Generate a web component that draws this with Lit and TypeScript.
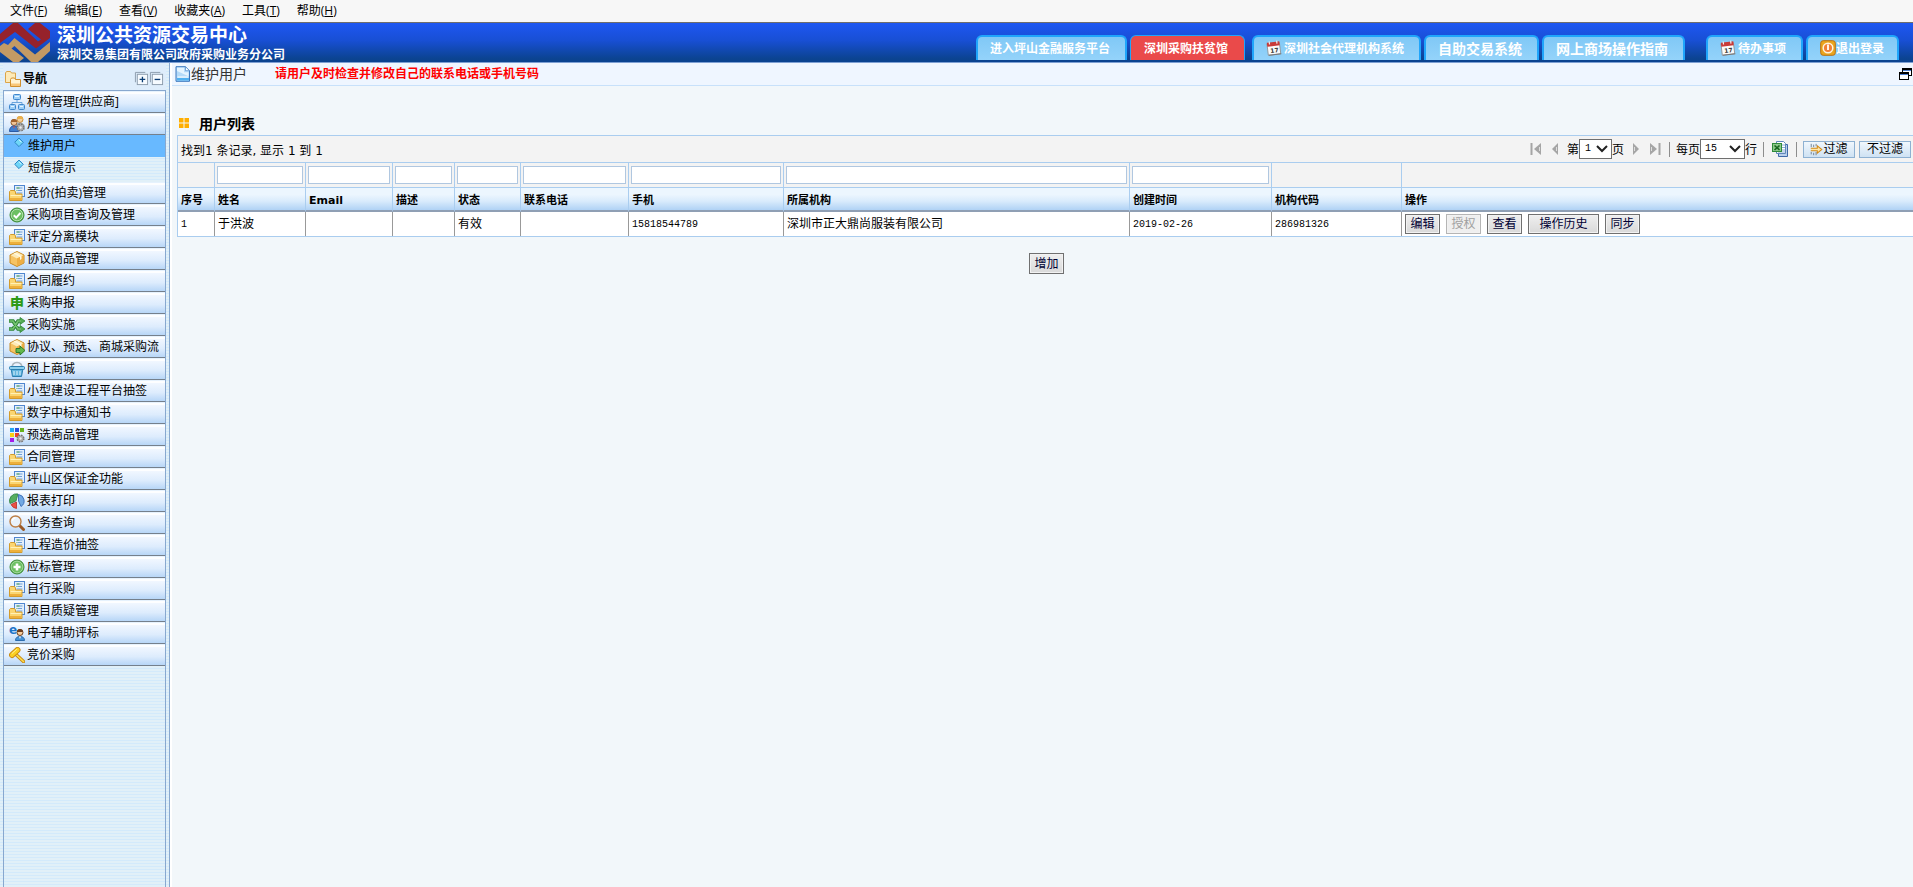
import { LitElement, html, svg, css, nothing, type SVGTemplateResult } from "lit";
import { customElement } from "lit/decorators.js";
import { classMap } from "lit/directives/class-map.js";

const docFolder = svg`
  <rect x="5.5" y=".5" width="10" height="11" fill="#e3effb" stroke="#4f86cf"/>
  <path d="M7.500 3h6M9 5.500h4M7.500 8h6" stroke="#6f9fd8" fill="none"/>
  <path d="M7.500 3h3M7.500 5.500h1" stroke="#58a84e" fill="none"/>
  <path d="M.5 15.500V6.500L1.500 5.500h4l1 1.500v2h6.500v6.500z" fill="#fbd671" stroke="#d39b2c"/>
  <path d="M1.500 10.500h11" stroke="#fff1b8" fill="none"/>
  <path d="M1 13h11.500v2H1z" fill="#eeb03c"/>`;

const cube = svg`
  <path d="M8 .5l7 3.500v8L8 15.500 1 12V4z" fill="#f6c363" stroke="#c88a24"/>
  <path d="M8 1l6.300 3.200L8 7.400 1.700 4.200z" fill="#fdeab8"/>
  <path d="M8 7.500v7.600l6.500-3.300V4.300z" fill="#eeae44"/>
  <path d="M4.500 2.600l6.500 3.300v3l1.500-.8V5L6.200 1.800z" fill="#fff8de"/>`;

const gear = svg`
  <circle cx="11.500" cy="11.500" r="3.300" fill="#bbb" stroke="#777" stroke-width="1.500" stroke-dasharray="1.600 1"/>
  <circle cx="11.500" cy="11.500" r="2.700" fill="#a9a9a9"/>
  <circle cx="11.500" cy="11.500" r="1.200" fill="#eee"/>`;

const icons: Record<string, SVGTemplateResult> = {
  folder: docFolder,
  org: svg`
    <path d="M8 5v4M3 11V8.500h10V11" fill="none" stroke="#6aa5dc"/>
    <rect x="4.500" y=".5" width="7" height="5" rx="1" fill="#9fd0f7" stroke="#3f86cc"/>
    <rect x=".5" y="10.500" width="6" height="5" rx="1" fill="#9fd0f7" stroke="#3f86cc"/>
    <rect x="9.500" y="10.500" width="6" height="5" rx="1" fill="#9fd0f7" stroke="#3f86cc"/>
    <path d="M6 2.500h4M2 12.500h3M11 12.500h3" stroke="#e6f5ff"/>`,
  users: svg`
    <circle cx="11" cy="3.500" r="3" fill="#f4cf9b" stroke="#c98b32"/>
    <path d="M8 3a3 3 0 0 1 6 0z" fill="#eab04c"/>
    <path d="M7 14V9q1-2.500 4-2.500T15.500 9v5z" fill="#9a9fa2"/>
    <circle cx="5" cy="6.500" r="3" fill="#f0c496" stroke="#8d5a2c"/>
    <path d="M2 6a3 3 0 0 1 6 0z" fill="#a2622d"/>
    <path d="M.5 15.500q0-5.500 4.500-5.500t4.500 5.500z" fill="#3f7ed0" stroke="#2b5aa4"/>
    <path d="M4 10.500l1 2 1-2z" fill="#e64a3a"/>${gear}`,
  check: svg`
    <circle cx="8" cy="8" r="7" fill="#4caa45" stroke="#3c8a37"/>
    <circle cx="8" cy="8" r="5.800" fill="#6cc062" stroke="#c9ebc4" stroke-width=".8"/>
    <path d="M4.800 8.200l2.400 2.400 4.200-4.600" fill="none" stroke="#fff" stroke-width="2"/>`,
  cube,
  shuffle: svg`
    <path d="M0 4h4l5 8h3M0 12h4l5-8h3" fill="none" stroke="#2e8636" stroke-width="3.600"/>
    <path d="M11 .5l5 3.500-5 3.500zM11 8.500l5 3.500-5 3.500z" fill="#55ab54" stroke="#2e8636" stroke-width=".8"/>
    <path d="M.5 4H4l5 8h3M.5 12H4l5-8h3" fill="none" stroke="#74c270" stroke-width="1.600"/>`,
  cubeArrow: svg`${cube}
    <path d="M7 9.500h4V7l5 4.500-5 4.500v-2.500H7z" fill="#62b94e" stroke="#2f7c2a"/>`,
  basket: svg`
    <path d="M3 7q0-5.500 5-5.500T13 7" fill="none" stroke="#a9b4bb" stroke-width="1.500"/>
    <path d="M2 7.500h12l-1.500 8h-9z" fill="#62b4de" stroke="#2b7fb0"/>
    <rect x=".5" y="5.500" width="15" height="3" rx="1" fill="#8fd0ee" stroke="#2b7fb0"/>
    <path d="M5 10v4M8 10v4M11 10v4" stroke="#e0f4fd"/>`,
  gridGear: svg`
    <rect x="1" y="1" width="4" height="4" fill="#23a9f2"/>
    <rect x="6" y="1" width="4" height="4" fill="#2a50dc"/>
    <rect x="11" y="1" width="4" height="4" fill="#67b31b"/>
    <rect x="1" y="6" width="4" height="4" fill="#f7cf17"/>
    <rect x="6" y="6" width="4" height="4" fill="#e9432c"/>
    <rect x="1" y="11" width="4" height="4" fill="#a51bea"/>${gear}`,
  pie: svg`
    <path d="M7 8L1 10.500A7 7 0 0 1 9 1z" fill="#55ae5f" stroke="#2d7f42" stroke-width=".8"/>
    <path d="M9.500 8V1.500a6.500 6.500 0 0 1 2.500 12z" fill="#72a9e4" stroke="#2b60ae" stroke-width=".8"/>
    <path d="M7.500 9v6.500A7 7 0 0 1 2 11.500z" fill="#ec4f42" stroke="#b92c25" stroke-width=".8"/>`,
  search: svg`
    <path d="M10 10l4.500 4.500" stroke="#9a5a28" stroke-width="3" stroke-linecap="round"/>
    <circle cx="6.500" cy="6.500" r="5.500" fill="#e9f2fa" stroke="#bd7f45" stroke-width="1.400"/>
    <path d="M3.500 6a3 3 0 0 1 3-3" fill="none" stroke="#fff" stroke-width="1.300"/>`,
  plus: svg`
    <circle cx="8" cy="8" r="7" fill="#4caa45" stroke="#3c8a37"/>
    <circle cx="8" cy="8" r="5.900" fill="#6cc062" stroke="#b7e2b1" stroke-width=".8"/>
    <path d="M8 4.500v7M4.500 8h7" stroke="#fff" stroke-width="2.600"/>`,
  eUser: svg`
    <text x="0" y="9" font-family="DejaVu Sans" font-weight="700" font-size="12" fill="#1d74c8">e</text>
    <path d="M6.500 15.500q0-4 4.500-4t4.500 4z" fill="#4593d6" stroke="#2c6cae"/>
    <circle cx="11" cy="7.500" r="3" fill="#f7cd9c" stroke="#6b3d1e"/>
    <path d="M8 7a3 3 0 0 1 6 0z" fill="#6b3d1e"/>
    <path d="M10 11.500l1 2.500 1-2.500z" fill="#fff"/>`,
  gavel: svg`
    <path d="M6.500 7l8 7.500" stroke="#c98b14" stroke-width="3.400" stroke-linecap="round"/>
    <path d="M6.500 7l8 7.500" stroke="#ffdf4d" stroke-width="1.600" stroke-linecap="round"/>
    <path d="M3 8L8.500 3" stroke="#c98b14" stroke-width="6" stroke-linecap="round"/>
    <path d="M3 8L8.500 3" stroke="#fbd023" stroke-width="4.200" stroke-linecap="round"/>
    <path d="M3 6.500L7.500 2.500" stroke="#fff29a" stroke-linecap="round"/>`,
  diamond: svg`<path d="M8 3l4.300 4.300L8 11.600 3.700 7.300z" fill="#6fd6f7" stroke="#2d86c4"/><path d="M8 4.800L10.500 7.300" stroke="#d9f6ff"/>`,
  navFolder: svg`
    <path d="M.5 11.500V2l1-1.500h4l1 1.500h4v9.500z" fill="#fdeab8" stroke="#dba548"/>
    <path d="M5.500 15.500V8.500L6.500 7h3l1 1.500h5v7z" fill="#fff3d3" stroke="#d08f2e"/>
    <path d="M6 12.500h9v2.500H6z" fill="#f9c779"/>`,
  calendar: svg`
    <g transform="rotate(-7 8 8)">
      <rect x="1.500" y="3" width="12.500" height="11.500" fill="#fbfbfb" stroke="#8b8b8b" stroke-width=".8"/>
      <rect x="1.500" y="2" width="12.500" height="4" fill="#c93a38"/>
      <path d="M4 1v3M11.500 1v3" stroke="#eee" stroke-width="1.200"/>
      <path d="M2 14.600h12.500" stroke="#777"/>
      <text x="4" y="12.500" font-family="DejaVu Sans" font-weight="700" font-size="6" fill="#333">17</text>
    </g>`,
  power: svg`
    <rect x=".7" y=".7" width="14.600" height="14.600" rx="2.500" fill="#eaa51d" stroke="#bb7010"/>
    <circle cx="8" cy="8" r="4.800" fill="#f28035" stroke="#fff3dd" stroke-width="1.500"/>
    <path d="M8 4.500v5.500" stroke="#fff" stroke-width="1.800"/>`,
  page: svg`
    <path d="M1 .7h9.500l4 4v10.600H1z" fill="#b4daf8" stroke="#3b77bd"/>
    <path d="M2 1.700h7v4.500h4.500v4L2 5z" fill="#e4f4ff"/>
    <path d="M10.500.7v4h4z" fill="#fff" stroke="#5a93d1" stroke-width=".8"/>
    <path d="M2.500 11h10.500" stroke="#fff"/><path d="M2 12h12v2.500H2z" fill="#4fb0f0"/>`,
  squares: svg`<path d="M3 3h4.500v4.500H3zM8.500 3H13v4.500H8.500zM3 8.500h4.500V13H3zM8.500 8.500H13V13H8.500z" fill="#ffae00"/>`,
  expand: svg`<path d="M1.500 12V1.500H12" fill="none" stroke="#8b9bab"/><rect x="3.500" y="3.500" width="11" height="11" fill="#f6fbff" stroke="#8b9bab"/><path d="M9 6v6M6 9h6" stroke="#0b3d74" stroke-width="1.400"/>`,
  collapse: svg`<path d="M1.500 12V1.500H12" fill="none" stroke="#8b9bab"/><rect x="3.500" y="3.500" width="11" height="11" fill="#f6fbff" stroke="#8b9bab"/><path d="M6 9h6" stroke="#0b3d74" stroke-width="1.400"/>`,
  restore: svg`<rect x="5.500" y="2.500" width="9" height="7" fill="#fff" stroke="#000"/><path d="M5 3.200h10" stroke="#000" stroke-width="2"/><rect x="2.500" y="6.500" width="9" height="7" fill="#fff" stroke="#000"/><path d="M2 7.200h10" stroke="#000" stroke-width="2"/><path d="M3 8.500h8M6 4.500h8" stroke="#4d7fd0"/>`,
  first: svg`<path d="M3.500 2v12" stroke="#a5a5a5" stroke-width="2"/><path d="M13 2v12L6 8z" fill="#a5a5a5"/><path d="M11.500 6v4" stroke="#dedede"/>`,
  prev: svg`<path d="M11 2v12L5 8z" fill="#a5a5a5"/><path d="M9.500 6v4" stroke="#dedede"/>`,
  next: svg`<path d="M5 2v12l6-6z" fill="#a5a5a5"/><path d="M6.500 6v4" stroke="#dedede"/>`,
  last: svg`<path d="M12.500 2v12" stroke="#a5a5a5" stroke-width="2"/><path d="M3 2v12l7-6z" fill="#a5a5a5"/><path d="M4.500 6v4" stroke="#dedede"/>`,
  excel: svg`
    <path d="M6.500 3.500h9v12h-9z" fill="#b9cfec" stroke="#3f69a8"/>
    <path d="M4.500.5h7l2 2v10h-9z" fill="#fff" stroke="#6088bb"/>
    <path d="M10 4h3M10 6.500h3M6 11h7M10 9h3" stroke="#8aacd4"/>
    <rect x=".5" y="2.500" width="9" height="8" fill="#8cc98a" stroke="#2f8a3a"/>
    <path d="M2.500 4.500l5 4.500M7.500 4.500L2.500 9" stroke="#17661f" stroke-width="1.600"/>`,
  filter: svg`
    <path d="M1.500 1v4M4.500 2v3M7.500 1v3M1.500 11v3M4.500 12v3M7.500 11v4" stroke="#5d6f82"/>
    <path d="M1 6.500h8V3.500l5.500 4.500L9 12.500V9.500H1" fill="#ffe7a8" stroke="#d48a17" stroke-width="1.300"/>`,
};

const icon = (name: string) =>
  html`<svg class="icon" viewBox="0 0 16 16" width="16" height="16" aria-hidden="true">${icons[name]}</svg>`;

const menus = [
  ["文件", "F"], ["编辑", "E"], ["查看", "V"], ["收藏夹", "A"], ["工具", "T"], ["帮助", "H"],
];

interface Tab { text: string; icon?: string; red?: boolean; large?: boolean; tight?: boolean; gap?: "s" | "l"; }

const tabs: Tab[] = [
  { text: "进入坪山金融服务平台" },
  { text: "深圳采购扶贫馆", red: true },
  { text: "深圳社会代理机构系统", icon: "calendar", gap: "s" },
  { text: "自助交易系统", large: true },
  { text: "网上商场操作指南", large: true },
  { text: "待办事项", icon: "calendar", gap: "l" },
  { text: "退出登录", icon: "power", tight: true },
];

interface NavItem { text: string; icon: string; children?: string[]; }

const nav: NavItem[] = [
  { text: "机构管理[供应商]", icon: "org" },
  { text: "用户管理", icon: "users", children: ["维护用户", "短信提示"] },
  { text: "竞价(拍卖)管理", icon: "folder" },
  { text: "采购项目查询及管理", icon: "check" },
  { text: "评定分离模块", icon: "folder" },
  { text: "协议商品管理", icon: "cube" },
  { text: "合同履约", icon: "folder" },
  { text: "采购申报", icon: "glyph" },
  { text: "采购实施", icon: "shuffle" },
  { text: "协议、预选、商城采购流", icon: "cubeArrow" },
  { text: "网上商城", icon: "basket" },
  { text: "小型建设工程平台抽签", icon: "folder" },
  { text: "数字中标通知书", icon: "folder" },
  { text: "预选商品管理", icon: "gridGear" },
  { text: "合同管理", icon: "folder" },
  { text: "坪山区保证金功能", icon: "folder" },
  { text: "报表打印", icon: "pie" },
  { text: "业务查询", icon: "search" },
  { text: "工程造价抽签", icon: "folder" },
  { text: "应标管理", icon: "plus" },
  { text: "自行采购", icon: "folder" },
  { text: "项目质疑管理", icon: "folder" },
  { text: "电子辅助评标", icon: "eUser" },
  { text: "竞价采购", icon: "gavel" },
];

interface Column { title: string; width: string; filter: boolean; value: string; num?: boolean; }

const columns: Column[] = [
  { title: "序号", width: "36px", filter: false, value: "1", num: true },
  { title: "姓名", width: "91px", filter: true, value: "于洪波" },
  { title: "Email", width: "87px", filter: true, value: "" },
  { title: "描述", width: "62px", filter: true, value: "" },
  { title: "状态", width: "66px", filter: true, value: "有效" },
  { title: "联系电话", width: "108px", filter: true, value: "" },
  { title: "手机", width: "155px", filter: true, value: "15818544789", num: true },
  { title: "所属机构", width: "346px", filter: true, value: "深圳市正大鼎尚服装有限公司" },
  { title: "创建时间", width: "142px", filter: true, value: "2019-02-26", num: true },
  { title: "机构代码", width: "130px", filter: false, value: "286981326", num: true },
];

const base = css`
  * { box-sizing: border-box; }
  .icon { display: block; flex: none; }
  a { color: inherit; text-decoration: none; }
  button, input, select { font-family: inherit; margin: 0; border-radius: 0; }
`;

@customElement("menu-bar")
export class MenuBar extends LitElement {
  static styles = [base, css`
    :host { display: block; }
    .bar {
      display: flex; gap: 17px; height: 23px; padding-left: 10px; align-items: center;
      background: #f7f7f7; border-bottom: 1px solid #6e6e6e;
    }
    .item { border: 0; padding: 0; background: none; color: #000; font-size: 12px; line-height: 16px; }
  `];
  render() {
    return html`<nav class="bar">${menus.map(([label, key]) =>
      html`<button class="item">${label}(<u>${key}</u>)</button>`)}</nav>`;
  }
}

@customElement("site-header")
export class SiteHeader extends LitElement {
  static styles = [base, css`
    :host { display: block; }
    .header {
      display: flex; height: 40px; color: #fff;
      background: linear-gradient(#1e57f2, #184fd4 45%, #0b4390 92%);
      border-bottom: 1px solid #7d9fd3;
    }
    .logo { display: block; flex: none; width: 50px; height: 39px; }
    .names { margin-left: 7px; white-space: nowrap; }
    .title { margin: 0; font-size: 19px; line-height: 24px; font-weight: 700; }
    .sub { margin: 0; font-size: 12px; line-height: 15px; font-weight: 700; }
    .tabs { display: flex; align-items: flex-end; gap: 3px; margin-left: auto; padding: 0 14px 2px 0; }
    .tab {
      display: flex; align-items: center; gap: 2px; height: 25px; padding: 0 15px 2px 12px;
      border: 2px solid #1fa5fb; border-bottom: 0; border-radius: 6px 6px 0 0;
      background: linear-gradient(#80c8f6, #94d3fa); font-size: 12px; font-weight: 700; white-space: nowrap;
    }
    .red { background: #ea4a4a; border-width: 1px 1px 0; padding: 0 16px 1px 13px; }
    .large { font-size: 14px; }
    .tight { gap: 0; padding-right: 13px; }
    .gap-s { margin-left: 4px; }
    .gap-l { margin-left: 18px; }
  `];
  render() {
    return html`
      <header class="header">
        <svg class="logo" viewBox="0 0 50 39" aria-hidden="true">
          <path d="M0 11L13 0h5l20 18.500 3-2L28 6l7-6h5l10 8v7L36 25.500 15 9 0 20z" fill="#96222b"/>
          <path d="M8 22l6.500-7L35 31.500 50 19v9L38 39h-7L14.500 23l-3 2.500L24 35l-5 4h-6L0 29v-6l4-3z" fill="#c39a64"/>
        </svg>
        <div class="names">
          <h1 class="title">深圳公共资源交易中心</h1>
          <p class="sub">深圳交易集团有限公司政府采购业务分公司</p>
        </div>
        <nav class="tabs">
          ${tabs.map((t) => html`<a href="#" class=${classMap({
            tab: true, red: !!t.red, large: !!t.large, tight: !!t.tight,
            "gap-s": t.gap === "s", "gap-l": t.gap === "l",
          })}>${t.icon ? icon(t.icon) : nothing}<span>${t.text}</span></a>`)}
        </nav>
      </header>`;
  }
}

@customElement("side-nav")
export class SideNav extends LitElement {
  static styles = [base, css`
    :host {
      display: flex; flex-direction: column; padding: 0 3px 0 3px; border-right: 1px solid #88a8cf;
      background: repeating-linear-gradient(#e1f0f8 0 2px, #d3eafb 2px 3px);
    }
    .head { display: flex; align-items: center; height: 27px; padding: 4px 2px 0; background: #deedfb; }
    .name { margin: 0 auto 0 2px; font-size: 12px; font-weight: 700; line-height: 16px; }
    .tool { border: 0; padding: 0; background: none; }
    .tool .icon { width: 15px; height: 15px; }
    .panel { flex: 1; margin: 0; padding: 0; list-style: none; border: 1px solid #88a8cf; border-bottom: 0; }
    .item {
      display: flex; align-items: center; gap: 2px; height: 22px; padding: 1px 0 0 5px;
      border-bottom: 1px solid #75808c; font-size: 12px; line-height: 16px; white-space: nowrap;
      background: linear-gradient(#e6f2fd 0 1px, #fdfeff 1px 3px, #f1f7ff 3px, #ddecfd 60%, #b7d6f7);
    }
    .glyph { width: 16px; font-size: 14px; font-weight: 900; color: #2d9a17; text-align: center; }
    .subs { margin: 0; padding: 0 0 3px; list-style: none; }
    .sub { display: flex; align-items: center; gap: 1px; height: 22px; padding-left: 7px; font-size: 12px; line-height: 16px; }
    .sub .icon { align-self: flex-start; }
    .on { background: #68b9ff; }
  `];
  render() {
    return html`
      <div class="head">
        ${icon("navFolder")}<h2 class="name">导航</h2>
        <button class="tool" aria-label="展开">${icon("expand")}</button>
        <button class="tool" aria-label="收起">${icon("collapse")}</button>
      </div>
      <ul class="panel">
        ${nav.map((n) => html`<li>
          <a class="item" href="#">${n.icon === "glyph" ? html`<span class="glyph">申</span>` : icon(n.icon)}<span>${n.text}</span></a>
          ${n.children ? html`<ul class="subs">${n.children.map((c, i) => html`
            <li><a class=${classMap({ sub: true, on: i === 0 })} href="#">${icon("diamond")}<span>${c}</span></a></li>`)}
          </ul>` : nothing}
        </li>`)}
      </ul>`;
  }
}

@customElement("user-list")
export class UserList extends LitElement {
  static styles = [base, css`
    :host { display: block; min-width: 0; background: #f2f7fa; border-left: 2px solid #fff; overflow: hidden; }
    .crumb {
      display: flex; height: 23px; padding: 0 0 0 3px; align-items: center; background: #eff6ff;
      border-bottom: 1px solid #c8e1fa; color: #333;
    }
    .where { margin: 0 28px 0 0; font-size: 14px; line-height: 16px; font-weight: 400; }
    .warn { margin: 0; font-size: 12px; line-height: 16px; font-weight: 700; color: #f00; }
    .restore { margin-left: auto; border: 0; padding: 0; background: none; }
    .body { margin: 0 -3px 0 0; padding: 28px 0 0 5px; }
    .caption { display: flex; align-items: center; gap: 7px; height: 21px; margin: 0 0 0 -1px; font-size: 14px; font-weight: 700; padding-bottom: 4px; }
    .list { border: 1px solid #aacdef; background: #f3f3f3; }
    .bar { display: flex; align-items: center; height: 26px; padding: 0 4px 0 3px; font-size: 12px; white-space: nowrap; }
    .found { margin-right: auto; font-family: "DejaVu Sans", "Noto Sans CJK SC", sans-serif; }
    .page { border: 0; padding: 0; background: none; }
    .pager { display: flex; align-items: center; gap: 3px; }
    .pick { display: flex; align-items: center; }
    .pager + .pick { margin: 0 4px; }
    .drop { display: grid; align-items: center; }
    .drop > * { grid-area: 1 / 1; }
    .drop .arrow { justify-self: end; margin-right: 4px; pointer-events: none; }
    .sel {
      appearance: none; width: 33px; height: 20px; padding: 0 0 2px 5px; border: 1px solid #6f6f6f;
      background: #fff; color: #000; font: 10px "Liberation Mono", monospace;
    }
    .wide { width: 45px; padding-left: 4px; }
    .sep { width: 1px; height: 15px; margin: 0 6px; background: #8d8d8d; }
    .export { margin: 0 2px; }
    .softs { display: flex; gap: 4px; }
    .soft {
      display: flex; align-items: center; justify-content: center; width: 52px; height: 17px;
      padding: 0; border: 1px solid #8eb1d2; background: linear-gradient(#f0f7fd, #cfe2f3); font-size: 12px; line-height: 14px;
    }
    .soft .icon { width: 13px; height: 13px; }
    table { width: 100%; min-width: 1500px; table-layout: fixed; border-collapse: separate; border-spacing: 0; }
    th, td { padding: 0 0 0 3px; text-align: left; white-space: nowrap; border-left: 1px solid #aacdef; }
    tr > :first-child { border-left: 0; }
    .filters td { height: 25px; padding: 0 2px; border-top: 1px solid #aacdef; }
    .box { display: block; width: 100%; height: 18px; padding: 0 2px; border: 1px solid #b0c7e0; background: #fff; font-size: 12px; }
    .heads th {
      height: 25px; padding-top: 3px; border-top: 1px solid #aacdef; border-bottom: 2px solid #8f9fb4; font-size: 11px; line-height: 16px;
      background: linear-gradient(#ecf6fe 30%, #d9ebfc 60%, #b0d2f5);
      font-family: "DejaVu Sans", "Noto Sans CJK SC", sans-serif;
    }
    .row td { height: 24px; background: #fff; border-left-color: #999; font-size: 12px; line-height: 16px; }
    .row .num { padding-top: 2px; font-family: "Liberation Mono", monospace; font-size: 10px; }
    .acts { display: flex; gap: 6px; }
    .btn {
      height: 20px; padding: 0 4px; border: 1px solid #707070; background: linear-gradient(#efefef, #d9d9d9);
      box-shadow: inset 0 0 0 1px #f2f2f2; color: #003; font-size: 12px; line-height: 16px; min-width: 35px;
    }
    .btn.long { min-width: 71px; }
    .btn:disabled { color: #a0a0a0; border-color: #b5b5b5; background: #efefef; }
    .foot { display: flex; justify-content: center; padding-top: 16px; }
    .foot .btn { height: 21px; }
  `];

  private drop(value: string, wide: boolean) {
    return html`<span class="drop">
      <select class=${classMap({ sel: true, wide })}><option>${value}</option></select>
      <svg class="arrow" width="12" height="8" viewBox="0 0 12 8" aria-hidden="true"><path d="M1 1l5 5 5-5" fill="none" stroke="#222" stroke-width="2"/></svg>
    </span>`;
  }

  render() {
    return html`
      <div class="crumb">
        ${icon("page")}<h2 class="where">维护用户</h2>
        <p class="warn">请用户及时检查并修改自己的联系电话或手机号码</p>
        <button class="restore" aria-label="还原">${icon("restore")}</button>
      </div>
      <div class="body">
        <h3 class="caption">${icon("squares")}用户列表</h3>
        <div class="list">
          <div class="bar">
            <span class="found">找到1 条记录, 显示 1 到 1</span>
            <div class="pager">
              <button class="page" aria-label="首页">${icon("first")}</button>
              <button class="page" aria-label="上一页">${icon("prev")}</button>
            </div>
            <label class="pick">第${this.drop("1", false)}页</label>
            <div class="pager">
              <button class="page" aria-label="下一页">${icon("next")}</button>
              <button class="page" aria-label="末页">${icon("last")}</button>
            </div>
            <span class="sep"></span>
            <label class="pick">每页${this.drop("15", true)}行</label>
            <span class="sep"></span>
            <button class="page export" aria-label="导出">${icon("excel")}</button>
            <span class="sep"></span>
            <div class="softs">
              <button class="soft">${icon("filter")}过滤</button>
              <button class="soft">不过滤</button>
            </div>
          </div>
          <table>
            <colgroup>${columns.map((c) => html`<col style="width:${c.width}">`)}<col></colgroup>
            <thead>
              <tr class="filters">
                ${columns.map((c) => html`<td>${c.filter ? html`<input class="box" type="text" aria-label=${c.title}>` : nothing}</td>`)}
                <td></td>
              </tr>
              <tr class="heads">${columns.map((c) => html`<th scope="col">${c.title}</th>`)}<th scope="col">操作</th></tr>
            </thead>
            <tbody>
              <tr class="row">
                ${columns.map((c) => html`<td class=${classMap({ num: !!c.num })}>${c.value}</td>`)}
                <td><div class="acts">
                  <button class="btn">编辑</button>
                  <button class="btn" disabled>授权</button>
                  <button class="btn">查看</button>
                  <button class="btn long">操作历史</button>
                  <button class="btn">同步</button>
                </div></td>
              </tr>
            </tbody>
          </table>
        </div>
        <div class="foot"><button class="btn">增加</button></div>
      </div>`;
  }
}

@customElement("app-root")
export class AppRoot extends LitElement {
  static styles = css`
    :host {
      display: flex; flex-direction: column; min-height: 100vh; color: #000; overflow: hidden;
      font-family: "Open Sans", "Noto Sans CJK SC", sans-serif; font-size: 12px;
    }
    .main { flex: 1; display: grid; grid-template-columns: 170px minmax(0, 1fr); }
  `;
  render() {
    return html`
      <menu-bar></menu-bar>
      <site-header></site-header>
      <div class="main"><side-nav></side-nav><user-list></user-list></div>`;
  }
}
